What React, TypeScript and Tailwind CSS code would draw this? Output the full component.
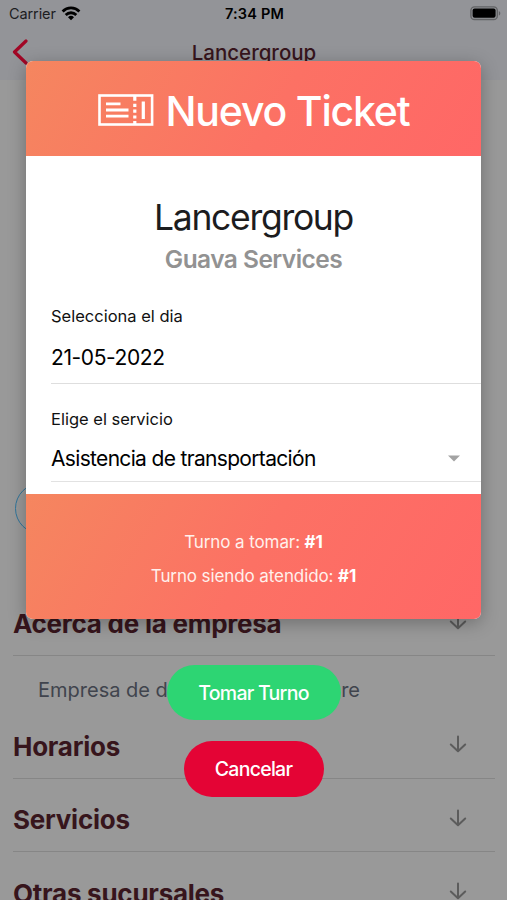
import type { ReactNode } from 'react'

function StatusBar() {
  return (
    <div className="flex h-[28px] items-center pl-[9px] pr-[6px] text-[14.5px] text-black">
      <div className="flex flex-1 items-center gap-[5px]">
        <span className="tracking-[-0.1px] text-[#1d1d1f]">Carrier</span>
        <svg className="-mt-[2px]" width="20" height="15" viewBox="0 0 20 15" fill="none" stroke="#000" strokeWidth="2.8">
          <path d="M1.6 5.4a12 12 0 0 1 16.8 0" />
          <path d="M4.7 8.9a7.6 7.6 0 0 1 10.6 0" />
          <path d="M10 14.2l-3-3a4.3 4.3 0 0 1 6 0z" fill="#000" stroke="none" />
        </svg>
      </div>
      <span className="mr-[1px] font-semibold tracking-[0.2px]">7:34 PM</span>
      <div className="flex flex-1 justify-end">
        <svg className="-mt-[2px]" width="31" height="15" viewBox="0 0 31 15">
          <rect x="0.9" y="0.9" width="26.4" height="12.6" rx="3.6" fill="none" stroke="#626365" strokeWidth="1.4" />
          <rect x="2.6" y="2.6" width="23" height="9.2" rx="2" fill="#000" />
          <path d="M28.8 5v4.6c1-.4 1.5-1.3 1.5-2.3s-.5-1.9-1.5-2.3z" fill="#626365" />
        </svg>
      </div>
    </div>
  )
}

function ArrowDown() {
  return (
    <svg width="18" height="18" viewBox="0 0 18 18" fill="none" stroke="#5c5c5c" strokeWidth="2" strokeLinecap="round" strokeLinejoin="round">
      <path d="M9 1.5V16M1.8 9.5L9 16.2l7.2-6.7" />
    </svg>
  )
}

function SectionRow({ title }: { title: string }) {
  return (
    <div className="ml-[13px] mr-[12px] flex h-[73.4px] items-center justify-between border-b border-[#868686] pr-[28px] pt-[10px]">
      <h2 className="text-[26px] font-bold leading-8 tracking-[-0.25px] text-[#37151c]">{title}</h2>
      <div className="pb-[5px]">
        <ArrowDown />
      </div>
    </div>
  )
}

function TicketIcon() {
  return (
    <svg width="56" height="32" viewBox="0 0 56 32" fill="none" stroke="#fff">
      <rect x="1.5" y="1.5" width="52.6" height="29" strokeWidth="2.6" />
      <path d="M8 9.9h14.5M8 16h22.5M8 22.2h22.5" strokeWidth="2.8" />
      <path d="M36.8 2v4.8M36.8 9.8v3.2M36.8 15.6v3.2M36.8 21.4v3.2M36.8 27v3" strokeWidth="3.2" />
      <path d="M45.3 7.5v17.5" strokeWidth="3.2" />
    </svg>
  )
}

function PillButton({ className, children }: { className: string; children: ReactNode }) {
  return (
    <button className={`flex h-[55.5px] items-center justify-center rounded-full pt-[2px] text-[19.5px] font-medium tracking-[-0.72px] text-white ${className}`}>
      {children}
    </button>
  )
}

function Background() {
  return (
    <div className="flex h-[900px] flex-col overflow-hidden">
      <header className="h-[80px] shrink-0 bg-[#939498]">
        <StatusBar />
        <div className="flex h-[48px] items-center">
          <svg className="ml-[12px] shrink-0" width="17" height="26" viewBox="0 0 17 26" fill="none" stroke="#a10625" strokeWidth="3.2" strokeLinecap="round" strokeLinejoin="round">
            <path d="M14 2L2.5 13L14 24" />
          </svg>
          <h1 className="flex-1 pr-[28px] pt-[2px] text-center text-[20.5px] font-medium text-[#37151c]">Lancergroup</h1>
        </div>
      </header>
      <div className="flex h-[502.5px] shrink-0 items-end pl-[15px] pb-[49px]">
        <div className="h-[51px] w-[300px] rounded-full border-[1.5px] border-[#30759b]" />
      </div>
      <div className="shrink-0">
        <SectionRow title="Acerca de la empresa" />
        <div className="flex h-[49.8px] justify-between pl-[38px] pr-[147px] pt-[20px] text-[20px] leading-7 text-[#40444d]">
          <span>Empresa de de</span>
          <span>re</span>
        </div>
        <SectionRow title="Horarios" />
        <SectionRow title="Servicios" />
        <SectionRow title="Otras sucursales" />
      </div>
    </div>
  )
}

function TicketCard() {
  return (
    <div className="flex w-[455px] flex-col overflow-hidden rounded-[7px] bg-white shadow-[0_4px_18px_rgba(0,0,0,0.28)]">
      <div className="flex h-[94.5px] items-center justify-center gap-[12px] bg-[linear-gradient(120deg,#f5865f_0%,#fc7164_55%,#ff6766_100%)] pt-[4px]">
        <TicketIcon />
        <span className="pt-[2px] text-[41px] font-medium leading-[48px] tracking-[-1.2px] text-white">Nuevo Ticket</span>
      </div>
      <div className="flex h-[338.5px] flex-col pl-[25px] text-black">
        <div className="mt-[40px] pr-[25px] text-center text-[35.5px] leading-[44px] tracking-[-1.3px] text-[#1c1c1e]">Lancergroup</div>
        <div className="mt-[4px] pr-[25px] text-center text-[24.5px] font-semibold leading-[30px] tracking-[-0.55px] text-[#929292]">Guava Services</div>
        <div className="mt-[32px] text-[16.5px] leading-5 text-[#111]">Selecciona el dia</div>
        <div className="mt-[18px] border-b border-[#dedede] pb-[11px] text-[21px] leading-7 tracking-[-0.4px]">21-05-2022</div>
        <div className="mt-[25px] text-[16.5px] leading-5 text-[#111]">Elige el servicio</div>
        <div className="mt-[16px] flex items-center justify-between border-b border-[#e2e2e2] pb-[8px] pr-[21px] text-[21px] leading-7 tracking-[-0.67px]">
          <span>Asistencia de transportación</span>
          <svg width="12" height="7" viewBox="0 0 12 7">
            <path d="M0 .5h12L6 6.5z" fill="#a3a3a3" />
          </svg>
        </div>
      </div>
      <div className="flex h-[124.5px] flex-col items-center justify-center gap-[6px] bg-[linear-gradient(120deg,#f5865f_0%,#fc7164_50%,#ff6766_100%)] pt-[5px] text-[17px] leading-7 tracking-[-0.1px] text-[#fff0ec]">
        <div>Turno a tomar: <b className="text-white">#1</b></div>
        <div>Turno siendo atendido: <b className="text-white">#1</b></div>
      </div>
    </div>
  )
}

export default function App() {
  return (
    <div className="relative h-[900px] w-[507px] overflow-hidden bg-[#999] font-['Inter',sans-serif]">
      <Background />
      <div className="absolute inset-0 flex flex-col items-center pt-[61px]">
        <TicketCard />
        <PillButton className="mt-[46px] w-[174px] bg-[#2dd573]">Tomar Turno</PillButton>
        <PillButton className="mt-[21px] w-[140px] bg-[#e40435]">Cancelar</PillButton>
      </div>
    </div>
  )
}
